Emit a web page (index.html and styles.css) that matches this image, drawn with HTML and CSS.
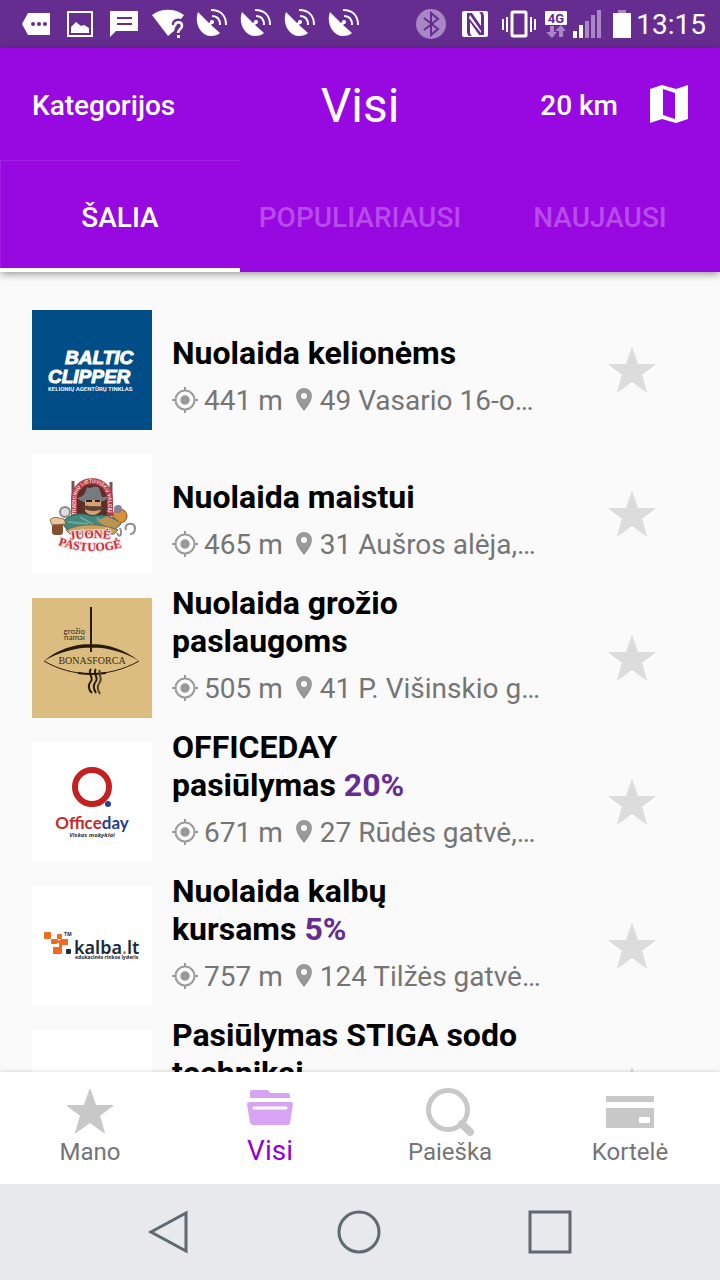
FILE: index.html
```html
<!DOCTYPE html>
<html lang="lt">
<head>
    <meta charset="utf-8"/>
    <title>Nuolaidos - Visi</title>
    <meta name="viewport" content="width=device-width,initial-scale=1">
    <link rel="stylesheet" href="styles.css">
</head>
<body>
<!--icons used more than once-->
<svg class="sprite" aria-hidden="true">
    <symbol id="dish" viewBox="0 0 32 32">
        <path fill="currentColor" d="M2 4C-2 14 4 28 15 28c4 0 7-1 9-3L15 17l3-3-2-2-3 3z"/>
        <path fill="none" stroke="currentColor" stroke-width="2" d="M16 8c5 0 8 3 8 9M15 2c10 0 15 6 15 15"/>
        <circle cx="16" cy="14" r="2" fill="currentColor"/>
    </symbol>
    <symbol id="star" viewBox="0 0 48 48">
        <path fill="currentColor" stroke="currentColor" stroke-linejoin="round" d="M24 2l5.800 16.500H47L33.500 28.700 38.500 46 24 35.500 9.500 46l5-17.300L1 18.500h17.200z"/>
    </symbol>
    <symbol id="target" viewBox="0 0 26 26">
        <circle cx="13" cy="13" r="9.500" fill="none" stroke="currentColor" stroke-width="2"/>
        <circle cx="13" cy="13" r="4.700" fill="currentColor"/>
        <path stroke="currentColor" stroke-width="2" d="M13 0v4M13 22v4M0 13h4M22 13h4"/>
    </symbol>
    <symbol id="pin" viewBox="0 0 16 24">
        <path fill="currentColor" fill-rule="evenodd" d="M8 0a8 8 0 0 0-8 8c0 6 8 15 8 15s8-9 8-15a8 8 0 0 0-8-8zm0 5a3 3 0 1 1 0 6 3 3 0 0 1 0-6z"/>
    </symbol>
</svg>

<div class="statusBar">
    <div class="notices">
        <svg viewBox="0 0 44 32"><path fill="#fff" d="M14 5h22v22H14L8 16z"/><g fill="#662d91"><circle cx="19" cy="16" r="2"/><circle cx="25" cy="16" r="2"/><circle cx="31" cy="16" r="2"/></g></svg>
        <svg viewBox="0 0 44 32"><path fill="none" stroke="#fff" stroke-width="2" d="M10 4h24v24H10z"/><path fill="#fff" d="M13 25v-6l5-5 5 4 3-1 5 3v5z"/></svg>
        <svg viewBox="0 0 44 32"><path fill="#fff" d="M8 3h28v20H14l-6 6z"/><path stroke="#662d91" stroke-width="2" d="M15 10h15M15 16h15"/></svg>
        <svg viewBox="0 0 44 32"><path fill="#fff" d="M6 7C15 0 29 0 38 7l-3 4c-5-2-10 2-9 6h4l-2 6-6 5z"/><path fill="none" stroke="#fff" stroke-width="2.500" d="M29 18c0-5 7-5 7 0 0 3-4 3-4 7"/><path fill="#fff" d="M31 27h3v3h-3z"/></svg>
        <svg><use href="#dish" x="6" width="32" height="32"/></svg>
        <svg><use href="#dish" x="6" width="32" height="32"/></svg>
        <svg><use href="#dish" x="6" width="32" height="32"/></svg>
        <svg><use href="#dish" x="6" width="32" height="32"/></svg>
    </div>
    <div class="system">
        <svg class="wide" viewBox="0 0 44 32"><circle cx="22" cy="16" r="15" fill="#a986c6"/><path fill="none" stroke="#662d91" stroke-width="2" d="M15 10l14 11-7 6V5l7 6-14 11"/></svg>
        <svg class="wide" viewBox="0 0 44 32"><rect x="9" y="3" width="26" height="26" rx="2" fill="#fff"/><path fill="#662d91" d="M14 5h5l9 13V9q0-4-2-5h3q2 1 2 5v18h-5l-9-13v9q0 4 2 5h-3q-2-1-2-5z"/><path fill="#fff" d="M17 7l11 16v2L16 10z"/></svg>
        <svg class="wide" viewBox="0 0 44 32"><rect x="15" y="4" width="14" height="24" rx="1" fill="none" stroke="#fff" stroke-width="3"/><path stroke="#fff" stroke-width="2" d="M6 11v11M10 9v15M34 9v15M38 11v11"/></svg>
        <svg class="net" viewBox="0 0 22 32"><rect y="3" width="22" height="14" rx="1" fill="#fff"/><text class="netText" x="11" y="15" text-anchor="middle">4G</text><path fill="#a986c6" d="M5 18h4v6h3l-5 6-6-6h4zM14 29h4v-6h3l-5-6-6 6h4z"/></svg>
        <svg class="signal" viewBox="0 0 28 32"><path fill="#fff" d="M0 23h4v7H0zM6 17h4v13H6z"/><path fill="#a986c6" d="M12 13h4v17h-4zM18 7h4v23h-4zM24 2h4v28h-4z"/></svg>
        <svg class="battery" viewBox="0 0 18 32"><path fill="#a986c6" d="M5 2h8v4H5z"/><path fill="#fff" d="M0 5h18v25H0z"/></svg>
        <span class="clock">13:15</span>
    </div>
</div>

<header>
    <div class="toolbar">
        <button type="button" class="textBtn">Kategorijos</button>
        <h1>Visi</h1>
        <div class="tools">
            <button type="button" class="textBtn">20 km</button>
            <button type="button" class="mapBtn" aria-label="Žemėlapis">
                <svg viewBox="0 0 38 38"><path fill="#fff" fill-rule="evenodd" d="M0 4l12-4 14 4 12-4v34l-12 4-14-4-12 4zM13 4v26l12 4V8z"/></svg>
            </button>
        </div>
    </div>
    <nav class="tabs">
        <button type="button" class="tab active">ŠALIA</button>
        <button type="button" class="tab">POPULIARIAUSI</button>
        <button type="button" class="tab">NAUJAUSI</button>
    </nav>
</header>

<main>
    <ul class="offers">
        <li class="offer">
            <svg class="logo" viewBox="0 0 120 120" role="img" aria-label="Baltic Clipper">
                <rect width="120" height="120" fill="#004d88"/>
                <g class="clipper">
                    <text x="33" y="54">BALTIC</text>
                    <text x="16" y="73">CLIPPER</text>
                    <text class="small" x="16" y="81">KELIONIŲ AGENTŪRŲ TINKLAS</text>
                </g>
            </svg>
            <div class="info">
                <h2>Nuolaida kelionėms</h2>
                <p><svg class="target"><use href="#target"/></svg><span>441 m</span><svg class="pin"><use href="#pin"/></svg><span>49 Vasario 16-o…</span></p>
            </div>
            <button type="button" class="fav" aria-label="Įsiminti"><svg><use href="#star"/></svg></button>
        </li>
        <li class="offer">
            <svg class="logo" viewBox="0 0 120 120" role="img" aria-label="Juonė Pastuogė">
                <rect width="120" height="120" fill="#fff"/>
                <path stroke="#6d5a4c" stroke-width="3" d="M41 27v32M79 28v30"/>
                <circle cx="33" cy="58" r="5" fill="#ddd" stroke="#888" stroke-width="2"/>
                <circle cx="88" cy="62" r="7" fill="#dc9136" stroke="#79502d"/>
                <circle cx="86" cy="55" r="4" fill="#8a7f99"/>
                <path fill="#5b302b" d="M42 62V46c0-24 36-24 36 0v16z"/>
                <path fill="none" stroke="#b8394b" stroke-width="6" d="M42 62V46c0-25 36-25 36 0v16"/>
                <path id="arch" fill="none" stroke="none" d="M44 61V46c0-23 32-23 32 0v15"/>
                <text class="archText"><textPath href="#arch">TRADICINIŲ LIETUVIŠKŲ VALGIŲ</textPath></text>
                <path fill="#777b80" d="M45 44c5-1 8-3 10-11 5 3 7-3 12 1l3 9c3 0 5-1 6 1-7 6-22 8-31 0z"/>
                <path fill="#d3a27b" d="M53 46h16v10c-3 6-12 7-16 1z"/>
                <path fill="#60412f" d="M50 53c5-3 7 0 11-1 4 1 8-1 11 2-6 4-17 4-22-1z"/>
                <path stroke="#292525" stroke-width="2" d="M54 47h6M63 47h5"/>
                <path fill="#43877f" stroke="#285b59" d="M30 69c6-8 18-12 30-7 12-3 23 1 29 8l-8 7H36z"/>
                <path stroke="#68aaa2" stroke-width="2" d="M36 68l20 2M48 63l14 8M65 64l9 7"/>
                <path fill="#bd9354" d="M65 67l10-5 14 7-8 8z"/>
                <rect x="20" y="68" width="11" height="13" rx="3" fill="#84502f"/>
                <path fill="#e7c79c" stroke="#96653e" d="M18 66c4-5 10-1 14-1l2 5-14 1z"/>
                <path fill="#c8a35d" stroke="#7b6543" d="M34 76c14-7 35-7 52 0l-4 4H38z"/>
                <path fill="none" stroke="#8b8d8f" stroke-width="2" d="M88 74c3 8-1 10-3 5M94 76c-3-7 9-9 9-2 0 4-2 6-5 6"/>
                <path id="signTop" fill="none" d="M38 86Q60 82 84 86"/>
                <path id="signBottom" fill="none" d="M26 91Q60 103 98 91"/>
                <g class="signText">
                    <text><textPath href="#signTop">JUONĖ</textPath></text>
                    <text><textPath href="#signBottom">PASTUOGĖ</textPath></text>
                </g>
            </svg>
            <div class="info">
                <h2>Nuolaida maistui</h2>
                <p><svg class="target"><use href="#target"/></svg><span>465 m</span><svg class="pin"><use href="#pin"/></svg><span>31 Aušros alėja,…</span></p>
            </div>
            <button type="button" class="fav" aria-label="Įsiminti"><svg><use href="#star"/></svg></button>
        </li>
        <li class="offer">
            <svg class="logo" viewBox="0 0 120 120" role="img" aria-label="Bonasforca">
                <rect width="120" height="120" fill="#dbbd80"/>
                <path fill="#291b0c" d="M58 9h2v45h-2zM12 63C38 41 78 40 107 63 77 45 43 45 12 63z"/>
                <path fill="none" stroke="#291b0c" d="M12 63c29 17 65 17 95 0"/>
                <path fill="none" stroke="#291b0c" stroke-width="2" d="M46 75q13 2 28 0"/>
                <path fill="none" stroke="#291b0c" stroke-width="2" d="M59 71c-4 4 3 8 0 12-4 5-2 9 1 12M64 71c-4 4 3 8 0 12-4 5-2 9 0 12"/>
                <path fill="none" stroke="#554126" stroke-width="2" d="M68 72c-3 4 3 7 0 12-4 5-2 8 0 12"/>
                <g class="salon">
                    <text x="53" y="36" text-anchor="end">grožio</text>
                    <text x="53" y="42" text-anchor="end">namai</text>
                    <text class="brand" x="60" y="66" text-anchor="middle">BONASFORCA</text>
                </g>
            </svg>
            <div class="info">
                <h2>Nuolaida grožio<br>paslaugoms</h2>
                <p><svg class="target"><use href="#target"/></svg><span>505 m</span><svg class="pin"><use href="#pin"/></svg><span>41 P. Višinskio g…</span></p>
            </div>
            <button type="button" class="fav" aria-label="Įsiminti"><svg><use href="#star"/></svg></button>
        </li>
        <li class="offer">
            <svg class="logo" viewBox="0 0 120 120" role="img" aria-label="Officeday">
                <rect width="120" height="120" fill="#fff"/>
                <circle cx="60" cy="45" r="17" fill="none" stroke="#c32020" stroke-width="6"/>
                <circle cx="76" cy="62" r="3" fill="#25418b"/>
                <g class="office">
                    <text x="60" y="87" text-anchor="middle">Office<tspan>day</tspan></text>
                    <text class="small" x="60" y="95" text-anchor="middle">Viskas mokyklai</text>
                </g>
            </svg>
            <div class="info">
                <h2>OFFICEDAY<br>pasiūlymas <em>20%</em></h2>
                <p><svg class="target"><use href="#target"/></svg><span>671 m</span><svg class="pin"><use href="#pin"/></svg><span>27 Rūdės gatvė,…</span></p>
            </div>
            <button type="button" class="fav" aria-label="Įsiminti"><svg><use href="#star"/></svg></button>
        </li>
        <li class="offer">
            <svg class="logo" viewBox="0 0 120 120" role="img" aria-label="kalba.lt">
                <rect width="120" height="120" fill="#fff"/>
                <g fill="#f26a21">
                    <rect x="12" y="46" width="7" height="7" rx="1"/>
                    <rect x="19" y="53" width="6" height="5" rx="1"/>
                    <rect x="25" y="48" width="5" height="5" rx="1"/>
                    <path d="M20 53h5l2 2 2-2h7v6h-6v9h-9v-7h6v-4h-4l-3 1z"/>
                </g>
                <rect x="34" y="63" width="5" height="5" rx="1" fill="#20283a"/>
                <g class="kalba">
                    <text x="42" y="68">kalba<tspan>.</tspan>lt</text>
                    <text class="small" x="43" y="73">edukacinės rinkos lyderis</text>
                    <text class="small" x="32" y="50">TM</text>
                </g>
            </svg>
            <div class="info">
                <h2>Nuolaida kalbų<br>kursams <em>5%</em></h2>
                <p><svg class="target"><use href="#target"/></svg><span>757 m</span><svg class="pin"><use href="#pin"/></svg><span>124 Tilžės gatvė…</span></p>
            </div>
            <button type="button" class="fav" aria-label="Įsiminti"><svg><use href="#star"/></svg></button>
        </li>
        <li class="offer">
            <svg class="logo" viewBox="0 0 120 120" aria-hidden="true"><rect width="120" height="120" fill="#fff"/></svg>
            <div class="info">
                <h2>Pasiūlymas STIGA sodo<br>technikai</h2>
                <p></p>
            </div>
            <button type="button" class="fav" aria-label="Įsiminti"><svg><use href="#star"/></svg></button>
        </li>
    </ul>
</main>

<nav class="bottomNav">
    <a href="#"><svg viewBox="0 0 48 48"><use href="#star"/></svg>Mano</a>
    <a href="#" class="active"><svg viewBox="0 0 48 48"><path fill="currentColor" d="M4 11V5q0-2 2-2h15q2 0 3 3h17q3 0 3 2v3zM3 15h42q2 0 2 2l-3 19q0 2-2 2H7q-2 0-3-2L1 17q0-2 2-2z"/><path stroke="#fff" stroke-width="3" stroke-linecap="round" d="M8 21h32"/></svg>Visi</a>
    <a href="#"><svg viewBox="0 0 48 48"><circle cx="22" cy="23" r="19.500" fill="none" stroke="currentColor" stroke-width="5"/><path stroke="currentColor" stroke-width="8" stroke-linecap="round" d="M36 37l8 8"/></svg>Paieška</a>
    <a href="#"><svg viewBox="0 0 48 48"><path fill="currentColor" fill-rule="evenodd" d="M0 9h48v6H0zM0 21h48v20H0zM33 30v6h11v-6z"/></svg>Kortelė</a>
</nav>

<div class="systemNav">
    <button type="button" aria-label="Atgal"><svg viewBox="0 0 44 44"><path d="M38 3v38L3 22z"/></svg></button>
    <button type="button" aria-label="Pradžia"><svg viewBox="0 0 44 44"><circle cx="21" cy="22" r="20"/></svg></button>
    <button type="button" aria-label="Programos"><svg viewBox="0 0 44 44"><path d="M2 2h40v40H2z"/></svg></button>
</div>
</body>
</html>
```
FILE: styles.css
```css
* {
    box-sizing: border-box;
}

body {
    margin: 0;
    height: 100vh;
    display: flex;
    flex-direction: column;
    overflow: hidden;
    background: #fafafa;
    font-family: Roboto, "Liberation Sans", sans-serif;
}

button {
    border: 0;
    padding: 0;
    background: none;
    color: inherit;
    font: inherit;
}

svg {
    display: block;
    flex: none;
    overflow: visible;
}

.sprite {
    position: absolute;
    width: 0;
    height: 0;
    overflow: hidden;
}

/* status bar */
.statusBar {
    flex: none;
    display: flex;
    justify-content: space-between;
    align-items: center;
    height: 48px;
    padding: 0 14px;
    background: #662d91;
    color: #fff;
}

.notices, .system {
    display: flex;
    align-items: center;
}

.notices svg, .system .wide {
    width: 44px;
    height: 32px;
}

.system .net {
    width: 22px;
    height: 32px;
    margin-left: 4px;
}

.netText {
    font-size: 13px;
    font-weight: 700;
    fill: #662d91;
}

.system .signal {
    width: 28px;
    height: 32px;
    margin-left: 6px;
}

.system .battery {
    width: 18px;
    height: 32px;
    margin: 0 5px 0 12px;
}

.clock {
    padding-top: 2px;
    font-size: 28px;
    line-height: 34px;
}

/* header */
header {
    flex: none;
    position: relative;
    background: #9808e0;
    color: #fff;
    box-shadow: 0 2px 8px rgba(0, 0, 0, .4);
}

.toolbar {
    display: grid;
    grid-template-columns: 1fr auto 1fr;
    align-items: center;
    height: 112px;
    padding: 0 32px;
}

.textBtn {
    justify-self: start;
    padding-top: 2px;
    font-size: 28px;
    font-weight: 500;
}

h1 {
    margin: 0;
    padding-top: 2px;
    font-size: 48px;
    font-weight: 400;
}

.tools {
    display: flex;
    justify-content: flex-end;
    align-items: center;
    gap: 32px;
}

.mapBtn svg {
    width: 38px;
    height: 38px;
}

.tabs {
    display: grid;
    grid-template-columns: repeat(3, 1fr);
    height: 112px;
}

.tab {
    padding-top: 2px;
    font-size: 28px;
    font-weight: 500;
    color: #b64bea;
}

.tab.active {
    color: #fff;
    box-shadow: inset 0 -4px #fff, inset 1px 1px #a11ee3;
}

/* offer list */
main {
    flex: 1;
    min-height: 0;
    overflow: hidden;
}

.offers {
    list-style: none;
    margin: 0;
    padding: 26px 32px;
}

.offer {
    display: flex;
    align-items: center;
    gap: 20px;
    height: 144px;
}

.logo {
    width: 120px;
    height: 120px;
}

.info {
    flex: 1;
    min-width: 0;
    height: 144px;
    display: flex;
    flex-direction: column;
    justify-content: flex-end;
    gap: 12px;
    padding-bottom: 26px;
}

.info h2 {
    flex: none;
    margin: 0;
    font-size: 32px;
    line-height: 38px;
    font-weight: 700;
    color: #000;
}

.info h2 em {
    font-style: normal;
    color: #662d91;
}

.info p {
    flex: none;
    display: flex;
    align-items: center;
    height: 32px;
    margin: 0;
    font-size: 28px;
    line-height: 32px;
    color: #757575;
    white-space: nowrap;
}

.info p span {
    padding-top: 2px;
}

.target {
    width: 26px;
    height: 26px;
    margin-right: 6px;
    color: #999;
}

.pin {
    width: 16px;
    height: 24px;
    margin: 0 8px 0 13px;
    color: #999;
}

.fav {
    margin-right: 32px;
    color: #dcdcdc;
}

.fav svg {
    width: 48px;
    height: 48px;
}

/* partner logos */
.clipper {
    font: italic 700 19px "Liberation Sans", sans-serif;
    fill: #fff;
    stroke: #fff;
    stroke-width: 1px;
}

.clipper .small {
    font: 600 6px Roboto, sans-serif;
    stroke: none;
}

.archText {
    font: 700 5px "Liberation Sans", sans-serif;
    fill: #f4dcd8;
}

.signText {
    font: 700 12px "Liberation Serif", serif;
    fill: #c52d43;
    stroke: #f5dedb;
    stroke-width: 2px;
    paint-order: stroke;
}

.salon {
    font: 8px Lato, sans-serif;
    fill: #3c2b16;
}

.salon .brand {
    font: 10px "Liberation Serif", serif;
}

.office {
    font: 700 17px Lato, sans-serif;
    fill: #c9272b;
}

.office tspan {
    fill: #25418b;
}

.office .small {
    font: italic 700 6px "Open Sans", sans-serif;
    fill: #333;
}

.kalba {
    font: 600 18px "Noto Sans", sans-serif;
    fill: #20283a;
}

.kalba tspan {
    fill: #f26a21;
}

.kalba .small {
    font: 700 5px "Noto Sans", sans-serif;
}

/* bottom navigation */
.bottomNav {
    flex: none;
    position: relative;
    display: grid;
    grid-template-columns: repeat(4, 1fr);
    height: 112px;
    background: #fff;
    box-shadow: 0 0 4px rgba(0, 0, 0, .2);
}

.bottomNav a {
    display: flex;
    flex-direction: column;
    align-items: center;
    padding-top: 15px;
    font-size: 24px;
    line-height: 34px;
    color: #757575;
    text-decoration: none;
}

.bottomNav svg {
    width: 48px;
    height: 48px;
    color: #c8c8c8;
}

.bottomNav .active {
    font-size: 28px;
    line-height: 32px;
    color: #9400d3;
}

.bottomNav .active svg {
    color: #d9a3f3;
}

.systemNav {
    flex: none;
    position: relative;
    display: grid;
    grid-template-columns: repeat(3, 1fr);
    justify-items: center;
    align-items: center;
    height: 96px;
    padding: 0 75px;
    background: #e8e9ed;
}

.systemNav svg {
    width: 44px;
    height: 44px;
    fill: none;
    stroke: #5f6972;
    stroke-width: 3;
}
```
